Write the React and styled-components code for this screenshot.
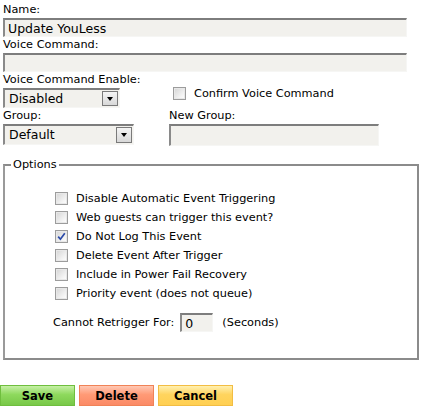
import React from 'react';
import styled, { createGlobalStyle } from 'styled-components';

const Global = createGlobalStyle`
  body {
    margin: 0;
    background: #fff;
    font-family: "DejaVu Sans", Verdana, sans-serif;
    color: #000;
  }
`;

const Page = styled.form`
  width: 423px;
  padding: 3px 0 0 3px;
  box-sizing: border-box;
`;

const Label = styled.div`
  font-size: 11.3px;
  line-height: 14px;
  height: 14px;
  white-space: nowrap;
`;

const Field = styled.div`
  display: flex;
  flex-direction: column;
  flex: none;
  width: ${(p) => (p.w ? `${p.w}px` : 'auto')};
  margin-bottom: ${(p) => p.mb || 0}px;
`;

const Input = styled.input`
  box-sizing: border-box;
  width: ${(p) => p.w}px;
  height: ${(p) => p.h || 19}px;
  margin: 1px 0 0 0;
  padding: 0 3px;
  font-family: inherit;
  font-size: 12.5px;
  color: #000;
  background: #f2f1ed;
  border-style: solid;
  border-width: 2px 1px 1px 2px;
  border-color: #7d7d7d #f6f6f4 #f6f6f4 #8a8a8a;
  outline: none;
`;

const Row = styled.div`
  display: flex;
  align-items: flex-start;
  gap: ${(p) => p.gap || 0}px;
  margin-top: ${(p) => p.mt || 0}px;
`;

const SelectBox = styled.div`
  box-sizing: border-box;
  width: ${(p) => p.w}px;
  height: ${(p) => p.h || 20}px;
  margin-top: 1px;
  display: flex;
  align-items: stretch;
  background: #f2f1ed;
  border-style: solid;
  border-width: 2px 1px 1px 2px;
  border-color: #7d7d7d #f6f6f4 #f6f6f4 #8a8a8a;
`;

const SelectValue = styled.span`
  flex: 1;
  font-size: 12.5px;
  line-height: ${(p) => p.lh || 17}px;
  padding-left: 4px;
`;

const ArrowBtn = styled.span`
  width: 16px;
  box-sizing: border-box;
  border: 1px solid #7a7a7a;
  margin: 1px 1px 1px 0;
  background: linear-gradient(#f4f4f4, #d8d8d8);
  display: flex;
  align-items: center;
  justify-content: center;

  &::after {
    content: '';
    border-left: 3.5px solid transparent;
    border-right: 3.5px solid transparent;
    border-top: 4px solid #000;
  }
`;

const Box = styled.span`
  width: 13px;
  height: 13px;
  box-sizing: border-box;
  border: 1px solid #9c9c9c;
  background: linear-gradient(135deg, #d4d4d4, #f4f4f4 70%, #fff);
  box-shadow: inset 0 0 0 1px #e8e8e8;
  display: inline-flex;
  align-items: center;
  justify-content: center;
  flex: none;
`;

const Check = ({ checked }) => (
  <Box>
    {checked && (
      <svg width="9" height="9" viewBox="0 0 9 9">
        <path d="M1.2 4.6 L3.4 7.2 L7.8 1.2" fill="none" stroke="#2b4aa8" strokeWidth="1.7" />
      </svg>
    )}
  </Box>
);

const CheckRow = styled.label`
  display: flex;
  align-items: center;
  gap: 8px;
  font-size: 11.3px;
  height: ${(p) => p.h || 19}px;
  margin-top: ${(p) => p.mt || 0}px;
`;

const Fieldset = styled.fieldset`
  margin: 12px 0 0 0;
  width: 416px;
  height: 202px;
  box-sizing: border-box;
  border: 2px solid #8b8b8b;
  border-color: #8b8b8b #8b8b8b #8b8b8b #9a9a9a;
  padding: 18px 0 0 6px;
  font-size: 11.3px;

  legend {
    padding: 0 2px;
    font-size: 11.3px;
  }
`;

const OptionList = styled.div`
  padding-left: 44px;
`;

const Retrigger = styled.div`
  display: flex;
  align-items: center;
  font-size: 11.3px;
  margin-top: 10px;
  margin-left: -2px;

  input {
    margin: 0 0 0 6px;
  }
`;

const Seconds = styled.span`
  margin-left: 9px;
`;

const Buttons = styled.div`
  display: flex;
  gap: 4px;
  margin: 25px 0 0 -3px;
`;

const palette = {
  green: ['#c6f0a6', '#8ed95d', '#78c848', '#6fbe3e'],
  red: ['#ffc8b4', '#ff9a76', '#fb8a66', '#f08257'],
  yellow: ['#fff0b0', '#ffd45e', '#ffcf52', '#f2bd43'],
};

const Button = styled.button`
  width: 75px;
  height: 21px;
  padding: 0;
  font-family: inherit;
  font-weight: bold;
  font-size: 11.5px;
  color: #000;
  border: 1px solid ${(p) => palette[p.tone][3]};
  background: linear-gradient(
    ${(p) => palette[p.tone][0]} 0%,
    ${(p) => palette[p.tone][1]} 45%,
    ${(p) => palette[p.tone][2]} 100%
  );
`;

const options = [
  ['Disable Automatic Event Triggering', false],
  ['Web guests can trigger this event?', false],
  ['Do Not Log This Event', true],
  ['Delete Event After Trigger', false],
  ['Include in Power Fail Recovery', false],
  ['Priority event (does not queue)', false],
];

export default function App() {
  return (
    <Page onSubmit={(e) => e.preventDefault()}>
      <Global />
      <Field mb={1}>
        <Label>Name:</Label>
        <Input w={404} defaultValue="Update YouLess" />
      </Field>
      <Field mb={1}>
        <Label>Voice Command:</Label>
        <Input w={404} />
      </Field>
      <Row>
        <Field w={170}>
          <Label>Voice Command Enable:</Label>
          <SelectBox w={117}>
            <SelectValue>Disabled</SelectValue>
            <ArrowBtn />
          </SelectBox>
        </Field>
        <CheckRow mt={12} h={16}>
          <Check />
          Confirm Voice Command
        </CheckRow>
      </Row>
      <Row gap={35} mt={1}>
        <Field>
          <Label>Group:</Label>
          <SelectBox w={131} h={21}>
            <SelectValue lh={18}>Default</SelectValue>
            <ArrowBtn />
          </SelectBox>
        </Field>
        <Field>
          <Label>New Group:</Label>
          <Input w={210} h={22} />
        </Field>
      </Row>
      <Fieldset>
        <legend>Options</legend>
        <OptionList>
          {options.map(([text, on]) => (
            <CheckRow key={text}>
              <Check checked={on} />
              {text}
            </CheckRow>
          ))}
          <Retrigger>
            Cannot Retrigger For:
            <Input w={33} h={19} defaultValue="0" />
            <Seconds>(Seconds)</Seconds>
          </Retrigger>
        </OptionList>
      </Fieldset>
      <Buttons>
        <Button tone="green">Save</Button>
        <Button tone="red">Delete</Button>
        <Button tone="yellow">Cancel</Button>
      </Buttons>
    </Page>
  );
}
